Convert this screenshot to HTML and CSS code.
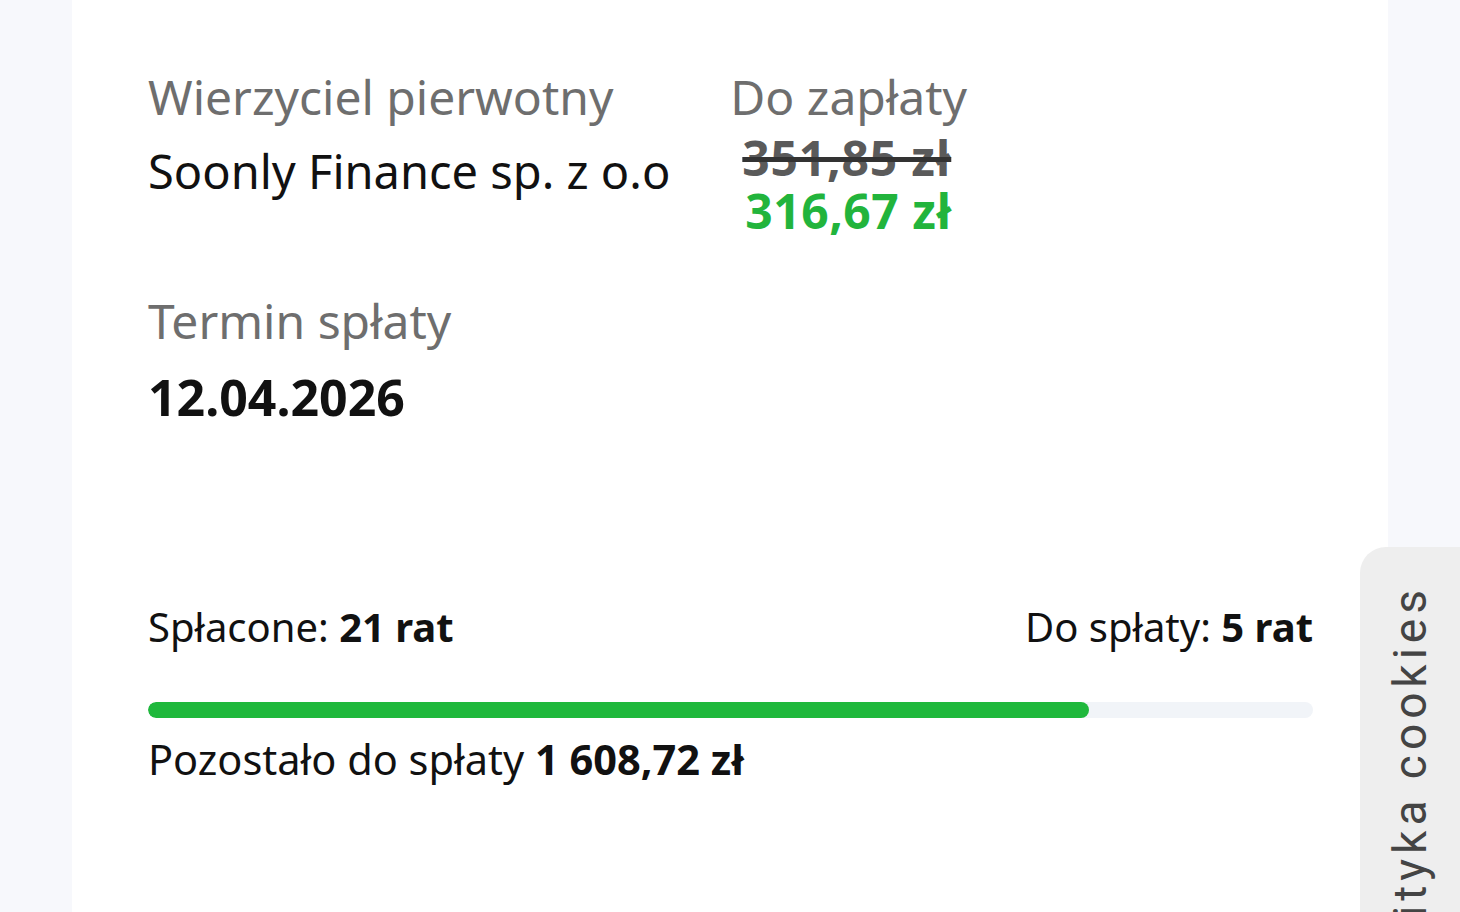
FILE: index.html
```html
<!DOCTYPE html>
<html lang="pl">
<head>
<meta charset="utf-8">
<link rel="stylesheet" href="styles.css">
</head>
<body>
<div class="page">
  <main class="card">
    <section class="top">
      <div class="field creditor">
        <div class="label">Wierzyciel pierwotny</div>
        <div class="value">Soonly Finance sp. z o.o</div>
      </div>
      <div class="field pay">
        <div class="label">Do zapłaty</div>
        <div class="old">351,85 zł</div>
        <div class="new">316,67 zł</div>
      </div>
    </section>
    <section class="field term">
      <div class="label">Termin spłaty</div>
      <div class="date">12.04.2026</div>
    </section>
    <section class="progress">
      <div class="counts">
        <span>Spłacone: <b>21 rat</b></span>
        <span>Do spłaty: <b>5 rat</b></span>
      </div>
      <div class="bar"><div class="fill" style="width:80.8%"></div></div>
      <div class="remain">Pozostało do spłaty <b>1 608,72 zł</b></div>
    </section>
  </main>
  <aside class="cookies"><span>Polityka cookies</span></aside>
</div>
</body>
</html>
```
FILE: styles.css
```css
html, body {
  margin: 0;
  padding: 0;
  height: 100%;
  overflow: hidden;
}
body {
  background: #f7f8fc;
  font-family: "Noto Sans", "Open Sans", sans-serif;
  color: #111;
}
.page {
  position: relative;
  height: 912px;
  display: flex;
  padding: 0 72px;
}
.card {
  flex: 1;
  background: #fff;
  padding: 60px 75px 0 76px;
}
.top {
  display: flex;
  gap: 60px;
}
.label {
  color: #6e6e6e;
  font-size: 48px;
  line-height: 74px;
}
.value {
  font-size: 47px;
  line-height: 74px;
  color: #111;
}
.old {
  font-size: 48px;
  line-height: 52px;
  font-weight: 700;
  letter-spacing: 0.8px;
  color: #5a5a5a;
  text-decoration: line-through;
  text-decoration-color: #333;
  text-decoration-thickness: 5px;
  margin-left: 12px;
  margin-top: -2px;
}
.new {
  font-size: 48px;
  line-height: 54px;
  font-weight: 700;
  letter-spacing: 0.5px;
  color: #22b43c;
  margin-left: 15px;
}
.term {
  margin-top: 46px;
}
.date {
  font-size: 50px;
  line-height: 78px;
  font-weight: 700;
}
.progress {
  margin-top: 163px;
}
.counts {
  display: flex;
  justify-content: space-between;
  font-size: 40px;
  line-height: 56px;
}
.counts b, .remain b { font-weight: 700; }
.bar {
  margin-top: 47px;
  height: 16px;
  border-radius: 8px;
  background: #f1f4f8;
  overflow: hidden;
}
.fill {
  height: 100%;
  background: #1fb83c;
  border-radius: 8px;
}
.remain {
  font-size: 41.5px;
  line-height: 56px;
  margin-top: 13px;
}
.cookies {
  position: absolute;
  right: 0;
  top: 547px;
  width: 100px;
  height: 400px;
  background: #eeeeee;
  border-top-left-radius: 26px;
  overflow: hidden;
}
.cookies span {
  position: absolute;
  left: 50px;
  top: 38px;
  transform-origin: 0 0;
  transform: rotate(-90deg) translate(-100%, -50%);
  white-space: nowrap;
  font-family: Roboto, sans-serif;
  font-size: 46px;
  letter-spacing: 5px;
  color: #444;
  line-height: 56px;
}
```
